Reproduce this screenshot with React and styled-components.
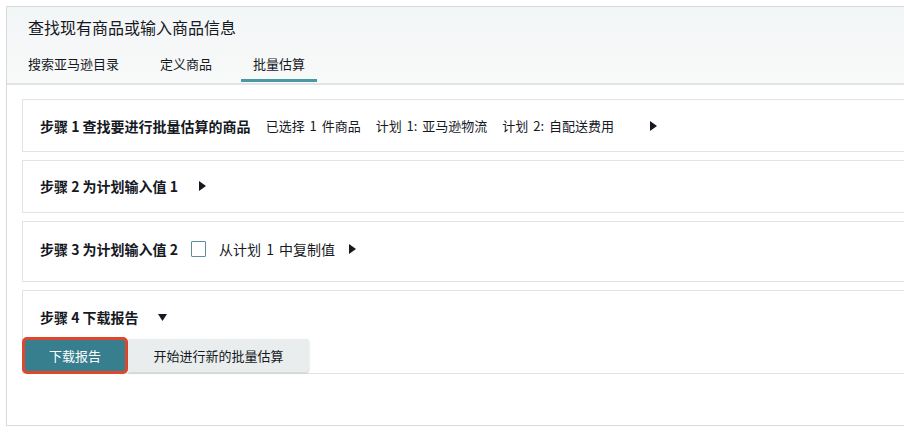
import React from "react";
import styled, { createGlobalStyle } from "styled-components";

const GlobalStyle = createGlobalStyle`
  body {
    margin: 0;
    background: #ffffff;
    overflow: hidden;
    font-family: "Noto Sans CJK SC", "Noto Sans", sans-serif;
    color: #16191f;
  }
`;

const Frame = styled.div`
  margin: 6px 0 0 6px;
  width: 940px;
  border: 1px solid #d5dbdb;
  border-right: none;
  background: #ffffff;
`;

const Header = styled.div`
  background: linear-gradient(#f3f6f7, #f8f9f9);
  border-bottom: 2px solid #e1e4e5;
  height: 78px;
  box-sizing: border-box;
`;

const Title = styled.h1`
  margin: 0;
  padding: 9px 0 0 21px;
  height: 38px;
  box-sizing: border-box;
  font-size: 16px;
  line-height: 22px;
  font-weight: 400;
`;

const Tabs = styled.div`
  display: flex;
  padding-left: 9px;
  gap: 17px;
`;

const Tab = styled.div`
  padding: 10px 12px 6px;
  font-size: 13px;
  line-height: 18px;
  border-bottom: 3px solid ${(p) => (p.active ? "#4a97a5" : "transparent")};
`;

const Body = styled.div`
  padding: 14px 0 51px 15px;
  display: flex;
  flex-direction: column;
  gap: 8px;
`;

const Panel = styled.section`
  border: 1px solid #e1e4e5;
  border-right: none;
  min-height: ${(p) => p.h}px;
  box-sizing: border-box;
  display: flex;
  flex-direction: column;
  justify-content: ${(p) => (p.top ? "flex-start" : "center")};
`;

const StepRow = styled.div`
  display: flex;
  align-items: center;
  gap: ${(p) => p.gap || 15}px;
  padding: ${(p) => p.pad || "0 0 0 17px"};
  font-size: 13px;
  line-height: 20px;
`;

const StepTitle = styled.span`
  font-size: 14px;
  font-weight: 700;
`;

const Note = styled.span`
  font-size: ${(p) => p.size || 13}px;
  word-spacing: 2px;
`;

const Check = styled.span`
  width: 15px;
  height: 16px;
  border: 1px solid #5f8d98;
  box-sizing: border-box;
  border-radius: 1px;
  background: #fff;
`;

const Caret = styled.svg`
  margin-left: ${(p) => p.ml || 0}px;
  fill: #16191f;
  flex-shrink: 0;
`;

const Buttons = styled.div`
  display: flex;
  align-items: center;
  margin: 10px 0 -1px -1px;
  position: relative;
`;

const PrimaryButton = styled.button`
  font-family: inherit;
  font-size: 13px;
  color: #ffffff;
  background: #377e8e;
  border: 3px solid #e0462b;
  border-radius: 5px;
  width: 106px;
  height: 37px;
  padding: 0;
`;

const SecondaryButton = styled.button`
  font-family: inherit;
  font-size: 13px;
  color: #16191f;
  background: #e9eded;
  border: none;
  border-radius: 0 3px 3px 0;
  box-shadow: 0 1px 2px rgba(0, 0, 0, 0.2);
  width: 181px;
  height: 33px;
  padding: 0;
`;

const Right = ({ ml }) => (
  <Caret ml={ml} width="7" height="10" viewBox="0 0 7 10">
    <path d="M0 0 L7 5 L0 10 Z" />
  </Caret>
);

const Down = ({ ml }) => (
  <Caret ml={ml} width="9" height="7" viewBox="0 0 9 7">
    <path d="M0 0 L9 0 L4.5 7 Z" />
  </Caret>
);

export default function App() {
  return (
    <>
      <GlobalStyle />
      <Frame>
        <Header>
          <Title>查找现有商品或输入商品信息</Title>
          <Tabs>
            <Tab>搜索亚马逊目录</Tab>
            <Tab>定义商品</Tab>
            <Tab active>批量估算</Tab>
          </Tabs>
        </Header>
        <Body>
          <Panel h={53}>
            <StepRow>
              <StepTitle>步骤 1 查找要进行批量估算的商品</StepTitle>
              <Note>已选择 1 件商品</Note>
              <Note>计划 1: 亚马逊物流</Note>
              <Note>计划 2: 自配送费用</Note>
              <Right ml={21} />
            </StepRow>
          </Panel>
          <Panel h={53}>
            <StepRow pad="0 0 2px 17px">
              <StepTitle>步骤 2 为计划输入值 1</StepTitle>
              <Right ml={6} />
            </StepRow>
          </Panel>
          <Panel h={61}>
            <StepRow gap={13} pad="0 0 6px 17px">
              <StepTitle>步骤 3 为计划输入值 2</StepTitle>
              <Check />
              <Note size={14}>从计划 1 中复制值</Note>
              <Right ml={1} />
            </StepRow>
          </Panel>
          <Panel top>
            <StepRow pad="16px 0 0 17px">
              <StepTitle>步骤 4 下载报告</StepTitle>
              <Down ml={4} />
            </StepRow>
            <Buttons>
              <PrimaryButton>下载报告</PrimaryButton>
              <SecondaryButton>开始进行新的批量估算</SecondaryButton>
            </Buttons>
          </Panel>
        </Body>
      </Frame>
    </>
  );
}
